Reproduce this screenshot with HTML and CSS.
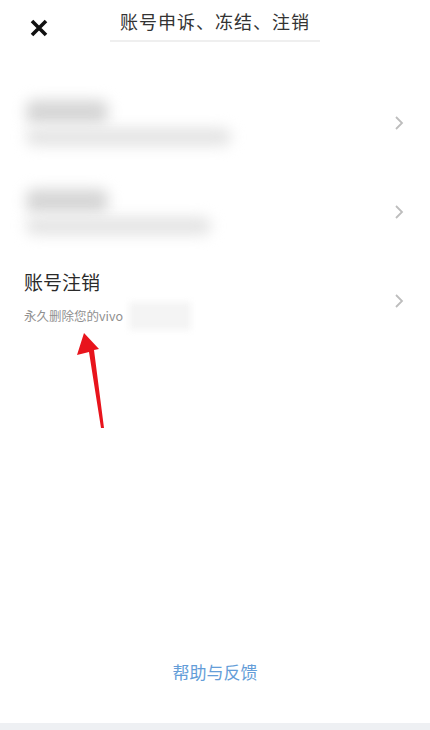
FILE: index.html
```html
<!DOCTYPE html>
<html lang="zh-CN">
<head>
<meta charset="utf-8">
<link rel="stylesheet" href="styles.css">
</head>
<body>
<div class="page">
  <header class="header">
    <div class="close">
      <svg width="18" height="18" viewBox="0 0 18 18"><path d="M2 2 L16 16 M16 2 L2 16" stroke="#111" stroke-width="3.6" stroke-linecap="butt"/></svg>
    </div>
    <div class="title">账号申诉、冻结、注销</div>
  </header>
  <div class="list">
    <div class="row">
      <div class="row-text">
        <div class="blob blob-title"></div>
        <div class="blob blob-sub wide"></div>
      </div>
      <svg class="chev" width="10" height="16" viewBox="0 0 10 16"><path d="M2 2 L8 8 L2 14" fill="none" stroke="#bdbdbd" stroke-width="1.8"/></svg>
    </div>
    <div class="row">
      <div class="row-text">
        <div class="blob blob-title"></div>
        <div class="blob blob-sub narrow"></div>
      </div>
      <svg class="chev" width="10" height="16" viewBox="0 0 10 16"><path d="M2 2 L8 8 L2 14" fill="none" stroke="#bdbdbd" stroke-width="1.8"/></svg>
    </div>
    <div class="row">
      <div class="row-text">
        <div class="item-title">账号注销</div>
        <div class="item-sub"><span>永久删除您的vivo</span><span class="mask"></span></div>
      </div>
      <svg class="chev" width="10" height="16" viewBox="0 0 10 16"><path d="M2 2 L8 8 L2 14" fill="none" stroke="#bdbdbd" stroke-width="1.8"/></svg>
    </div>
  </div>
  <div class="spacer"></div>
  <div class="footer"><span class="help">帮助与反馈</span></div>
  <div class="band"></div>
  <svg class="arrow" width="430" height="730" viewBox="0 0 430 730"><polygon points="84,333 99,349 94,350 104,428 101,428 89,352 77,355" fill="#e8141c"/></svg>
</div>
</body>
</html>
```
FILE: styles.css
```css
html, body {
  margin: 0;
  padding: 0;
  background: #ffffff;
}
body {
  font-family: "Noto Sans CJK SC", "Noto Sans", sans-serif;
}
.page {
  position: relative;
  width: 430px;
  height: 730px;
  display: flex;
  flex-direction: column;
  overflow: hidden;
}
.header {
  height: 78px;
  display: flex;
  align-items: flex-start;
  position: relative;
}
.close {
  width: 18px;
  height: 18px;
  margin: 18px 0 0 30px;
}
.title {
  margin: 6px 0 0 62px;
  width: 210px;
  text-align: center;
  font-size: 18px;
  line-height: 30px;
  color: #333;
  letter-spacing: 1px;
  border-bottom: 2px solid #efefef;
  padding-bottom: 4px;
}
.list {
  display: flex;
  flex-direction: column;
}
.row {
  height: 89px;
  display: flex;
  align-items: center;
  justify-content: space-between;
  padding: 0 24px 0 24px;
}
.row-text {
  display: flex;
  flex-direction: column;
}
.chev {
  margin-right: 2px;
}
.blob {
  background: #d6d6d6;
  filter: blur(7px);
  border-radius: 8px;
}
.blob-title {
  width: 82px;
  height: 24px;
  margin-left: 2px;
}
.blob-sub {
  height: 18px;
  margin-top: 4px;
  margin-left: 2px;
  background: #e4e4e4;
}
.blob-sub.wide { width: 205px; }
.blob-sub.narrow { width: 185px; }
.item-title {
  font-size: 19px;
  line-height: 24px;
  color: #2a2a2a;
  margin-top: -2px;
}
.item-sub {
  display: flex;
  align-items: center;
  font-size: 12.5px;
  line-height: 18px;
  color: #909090;
  margin-top: 8px;
}
.mask {
  width: 62px;
  height: 28px;
  margin-left: 6px;
  background: #f4f4f4;
  filter: blur(3px);
}
.spacer {
  flex: 1;
}
.footer {
  display: flex;
  justify-content: center;
  padding-bottom: 39px;
}
.help {
  font-size: 17px;
  line-height: 24px;
  color: #649dd8;
}
.band {
  height: 7px;
  background: #eef0f3;
}
.arrow {
  position: absolute;
  left: 0;
  top: 0;
  pointer-events: none;
}
```
